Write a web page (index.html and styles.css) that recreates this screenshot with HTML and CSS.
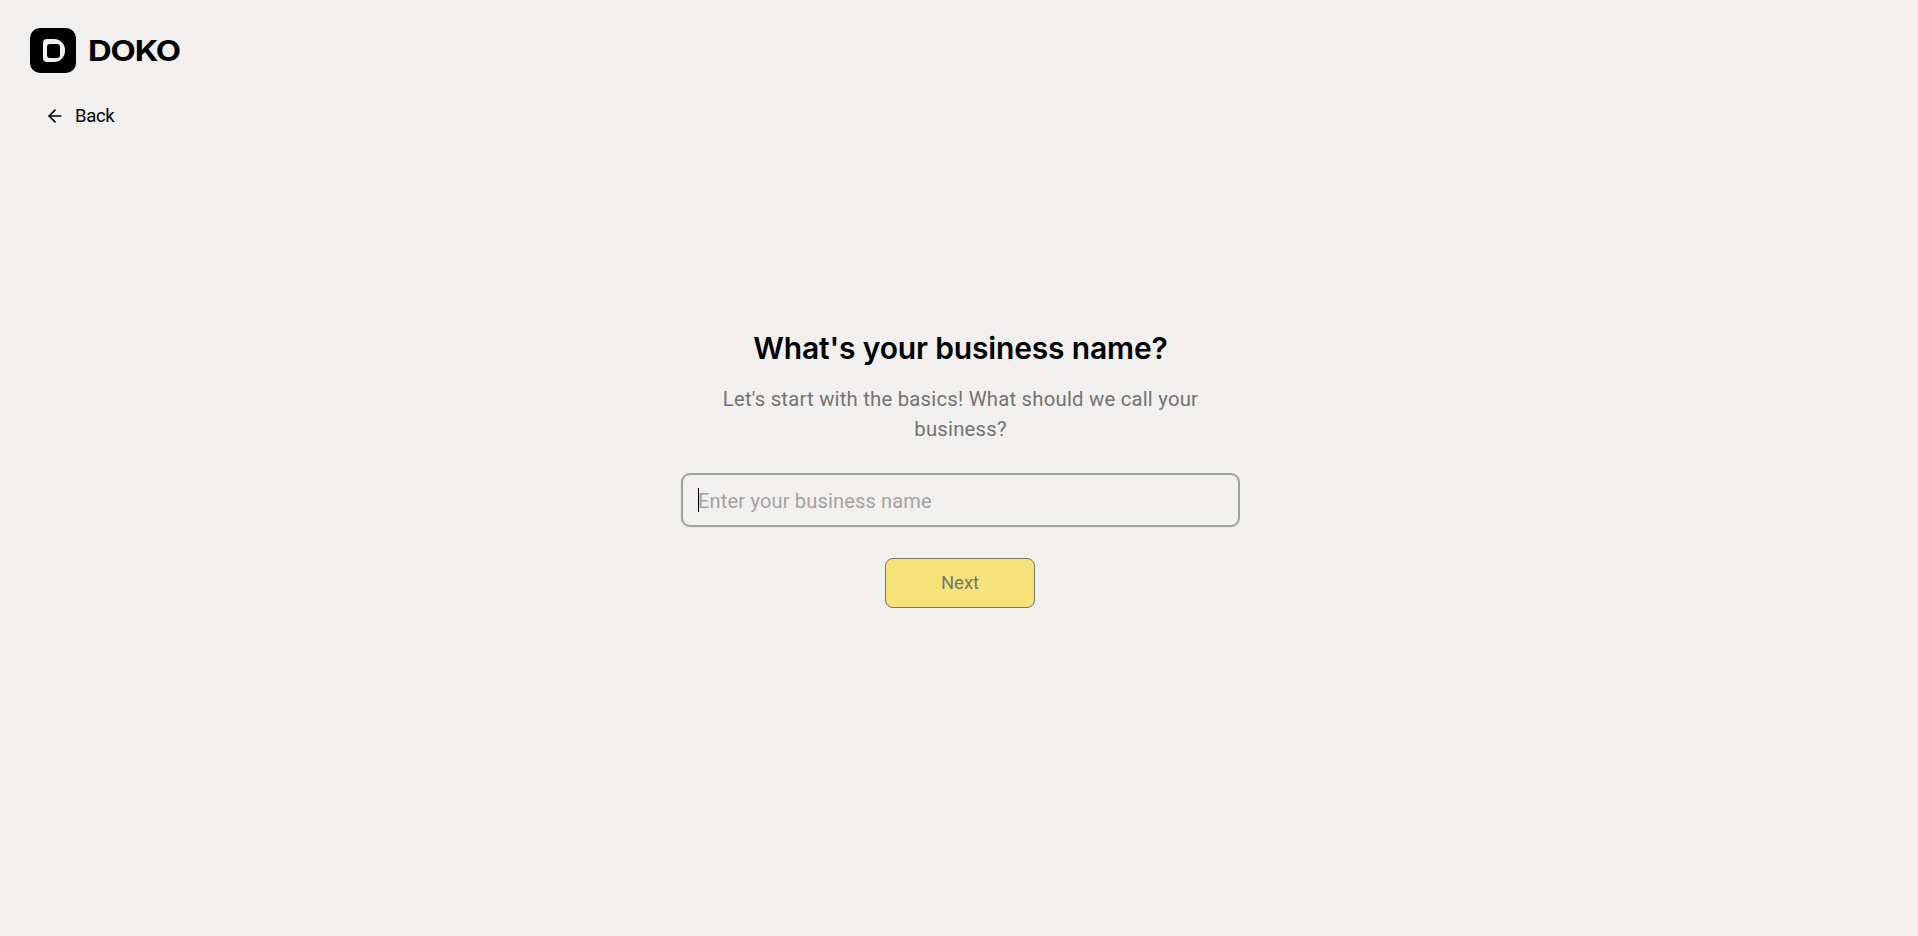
FILE: index.html
```html
<!DOCTYPE html>
<html lang="en">
<head>
  <meta charset="UTF-8">
  <title>Doko - Business name</title>
  <meta name="viewport" content="width=device-width, initial-scale=1">
  <link rel="stylesheet" href="styles.css">
</head>
<body>
  <header>
    <div class="logo">
      <div class="logo-tile"><div class="logo-mark"><span></span></div></div>
      <svg class="logo-name" width="96" height="46" viewBox="0 0 96 46">
        <text x="0" y="33" textLength="92" lengthAdjust="spacingAndGlyphs">DOKO</text>
      </svg>
    </div>
    <button type="button" class="back">
      <svg width="20" height="20" viewBox="0 0 24 24" fill="none" stroke="currentColor" stroke-width="2" stroke-linecap="round" stroke-linejoin="round">
        <path d="m12 19-7-7 7-7"/>
        <path d="M19 12H5"/>
      </svg>
      <span>Back</span>
    </button>
  </header>

  <main>
    <h1>What's your business name?</h1>
    <p>Let's start with the basics! What should we call your business?</p>
    <div class="field">
      <input type="text" placeholder="Enter your business name">
      <span class="caret"></span>
    </div>
    <button type="button" class="next" disabled>Next</button>
  </main>
</body>
</html>
```
FILE: styles.css
```css
* { box-sizing: border-box; }
body { margin: 0; min-height: 100vh; background: #f1f0ee; color: #000; font-family: Roboto, Arial, sans-serif; }
button { font-family: inherit; }

header { height: 328px; padding: 28px 30px 0; }
.logo { display: flex; height: 45px; }
.logo-tile { width: 46px; height: 45px; margin-right: 12px; padding: 11px 0 0 13px; background: #000; border-radius: 10px; }
.logo-mark { width: 22px; height: 23px; padding: 4.5px 4.5px 4.5px 4px; background: #f1f0ee; border-radius: 4px 11px 11px 4px; }
.logo-mark span { display: block; width: 13px; height: 14px; background: #000; border-radius: 3px; }
.logo-name { display: block; }
.logo-name text { font-family: Inter, sans-serif; font-size: 28.5px; font-weight: 700; letter-spacing: -1px; }

.back { display: flex; align-items: center; gap: 10px; margin-top: 24px; padding: 0 15px; height: 38px; border: none; background: none; color: #000; font-size: 18.5px; letter-spacing: -0.3px; }

main { display: flex; flex-direction: column; align-items: center; width: 562px; margin: 0 auto; padding-left: 3px; }
h1 { margin: 0; font-family: Inter, Arial, sans-serif; font-size: 30px; line-height: 40px; font-weight: 600; letter-spacing: -0.15px; white-space: nowrap; }
p { width: 500px; margin: 16px 0 29px; font-size: 20.3px; line-height: 30px; letter-spacing: 0.22px; color: #737373; text-align: center; }

.field { position: relative; width: 100%; }
input { display: block; width: 100%; height: 54px; padding: 2px 15px 0; border: 2px solid #a1a1a0; border-radius: 9px; outline: none; background: transparent; box-shadow: 0 1px 2px rgba(0,0,0,0.05); font-family: inherit; font-size: 20px; letter-spacing: 0.18px; }
input::placeholder { color: #a3a2a1; opacity: 1; }
.caret { position: absolute; left: 17px; top: 15px; width: 1px; height: 24px; background: #000; }

.next { width: 150px; height: 50px; margin: 31px 1px 0 0; border: 1px solid #78756c; border-radius: 8px; background: #f5e379; color: #77756f; font-size: 18.5px; }
```
